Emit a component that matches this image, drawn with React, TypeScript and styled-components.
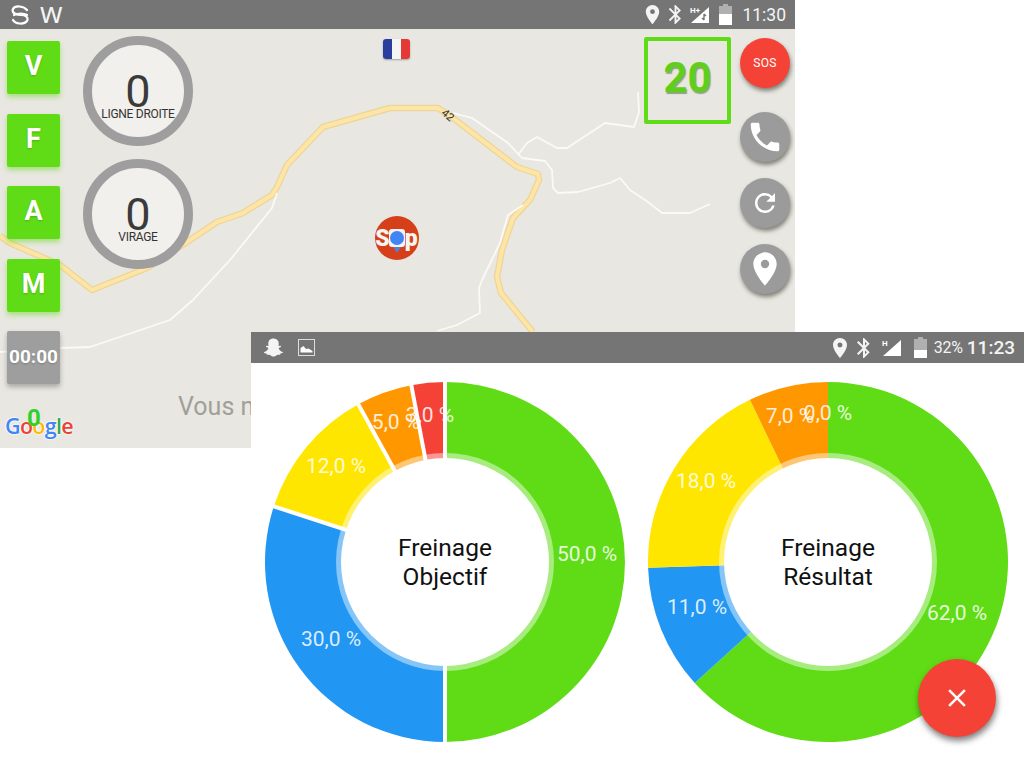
import React from 'react';
import styled, { createGlobalStyle } from 'styled-components';
import { FaSnapchatGhost } from 'react-icons/fa';
import { MdBluetooth, MdClose, MdLocationOn, MdPhone, MdRefresh } from 'react-icons/md';

const GlobalStyle = createGlobalStyle`
    html, body {
        margin: 0;
        padding: 0;
        background: #fff;
        font-family: Roboto, "Liberation Sans", sans-serif;
    }
`;

const Canvas = styled.div`
    position: relative;
    width: 1024px;
    height: 768px;
    overflow: hidden;
    background: #fff;
`;

const MapScreen = styled.section`
    position: absolute;
    left: 0;
    top: 0;
    width: 795px;
    height: 448px;
    display: flex;
    flex-direction: column;
`;

const ChartScreen = styled.section`
    position: absolute;
    left: 251px;
    top: 332px;
    width: 773px;
    height: 436px;
    background: #fff;
    display: flex;
    flex-direction: column;
`;

const StatusBar = styled.div<{ $height: number; $left: number }>`
    flex: none;
    height: ${p => p.$height}px;
    background: #757575;
    color: #f4f4f4;
    display: flex;
    align-items: center;
    justify-content: space-between;
    padding: 0 9px 0 ${p => p.$left}px;
`;

const StatusGroup = styled.div<{ $gap: number }>`
    display: flex;
    align-items: center;
    gap: ${p => p.$gap}px;
`;

const StatusSlot = styled.div<{ $before: number }>`
    display: flex;
    align-items: center;
    margin-left: ${p => p.$before}px;
`;

const Clock = styled.span<{ $weight: number; $size: number }>`
    font-size: ${p => p.$size}px;
    font-weight: ${p => p.$weight};
`;

const BatteryText = styled.span`
    font-size: 16px;
    letter-spacing: -0.2px;
`;

const AppLetter = styled.span`
    font-size: 29px;
    line-height: 24px;
    font-family: "Open Sans", sans-serif;
    margin-bottom: 5px;
`;

const MapArea = styled.div`
    position: relative;
    flex: 1;
    background: #e9e7e1;
    overflow: hidden;
    display: flex;
    padding-left: 7px;
    padding-right: 5px;
`;

const Roads = styled.svg`
    position: absolute;
    left: 0;
    top: 0;
    width: 795px;
    height: 419px;
`;

const LetterColumn = styled.div`
    position: relative;
    display: flex;
    flex-direction: column;
    gap: 19.5px;
    padding-top: 12px;
    margin-right: 23px;
`;

const LetterButton = styled.div<{ $muted?: boolean }>`
    box-sizing: border-box;
    width: 53px;
    height: 53px;
    padding-bottom: 3px;
    border-radius: 2px;
    background: ${p => (p.$muted ? '#9e9e9e' : '#5fdc15')};
    box-shadow: 0 3px 5px ${p => (p.$muted ? 'rgba(90,90,90,.45)' : 'rgba(95,220,21,.5)')};
    color: #fff;
    font-weight: 700;
    font-size: ${p => (p.$muted ? 19 : 27)}px;
    display: flex;
    align-items: center;
    justify-content: center;
    text-shadow: 0 1px 2px rgba(0, 0, 0, .2);
`;

const GaugeColumn = styled.div`
    position: relative;
    display: flex;
    flex-direction: column;
    gap: 13px;
    padding-top: 7px;
`;

const Gauge = styled.div`
    box-sizing: border-box;
    width: 110px;
    height: 110px;
    border: 9px solid #9e9e9e;
    border-radius: 50%;
    background: #f1f0ec;
    padding-top: 31px;
    display: flex;
    flex-direction: column;
    align-items: center;
    color: #333;
`;

const GaugeValue = styled.span`
    font-size: 45px;
    font-weight: 400;
    line-height: 32px;
    color: #3a3a3a;
`;

const GaugeLabel = styled.span`
    font-size: 12px;
    line-height: 12px;
    white-space: nowrap;
    letter-spacing: -0.3px;
`;

const Spacer = styled.div`
    flex: 1;
`;

const SpeedBox = styled.div`
    position: relative;
    box-sizing: border-box;
    width: 87px;
    height: 87px;
    margin: 8px 9px 0 0;
    padding-bottom: 6px;
    border: 4px solid #5fdc15;
    border-radius: 2px;
    display: flex;
    align-items: center;
    justify-content: center;
    color: #5fcf1c;
    font-size: 42px;
    font-weight: 700;
    text-shadow: 1px 2px 1px rgba(70, 110, 40, .55);
`;

const RoundColumn = styled.div`
    position: relative;
    display: flex;
    flex-direction: column;
    gap: 16px;
    padding-top: 9px;
`;

const RoundButton = styled.div<{ $red?: boolean }>`
    width: 50px;
    height: 50px;
    border-radius: 50%;
    background: ${p => (p.$red ? '#f44336' : '#9b9b9b')};
    box-shadow: 1px 3px 4px rgba(60, 60, 50, .6);
    color: #fff;
    display: flex;
    align-items: center;
    justify-content: center;
    font-size: 12px;
    letter-spacing: 0.4px;
    margin-bottom: ${p => (p.$red ? 8 : 0)}px;
`;

const Flag = styled.div`
    position: absolute;
    left: 383px;
    top: 10px;
    width: 27px;
    height: 20px;
    border-radius: 3px;
    overflow: hidden;
    display: flex;
    box-shadow: 0 1px 2px rgba(0, 0, 0, .3);
`;

const FlagStripe = styled.div<{ $color: string }>`
    flex: 1;
    background: ${p => p.$color};
`;

const StopMarker = styled.div`
    position: absolute;
    left: 375px;
    top: 187px;
    width: 44px;
    height: 44px;
    border-radius: 50%;
    background: #d5401b;
    color: #f6f4f2;
    font-weight: 900;
    font-size: 23px;
    letter-spacing: 1px;
    display: flex;
    align-items: center;
    justify-content: center;
`;

const StopDot = styled.div`
    position: absolute;
    left: 14px;
    top: 13px;
    width: 16px;
    height: 18px;
    border-radius: 3px;
    background: #f6f4f2;
    &::before {
        content: '';
        position: absolute;
        left: 1px;
        top: 2px;
        width: 14px;
        height: 14px;
        border-radius: 50%;
        background: #4285f4;
    }
    &::after {
        content: '';
        position: absolute;
        left: 4px;
        top: 18px;
        border: 4px solid transparent;
        border-top: 6px solid #5b7fc4;
    }
`;

const NoticeText = styled.div`
    position: absolute;
    left: 178px;
    top: 362px;
    font-size: 25px;
    line-height: 32px;
    color: #a09f98;
    white-space: nowrap;
`;

const GoogleMark = styled.div`
    position: absolute;
    left: 5px;
    top: 384px;
    font-family: "Open Sans", sans-serif;
    font-weight: 600;
    font-size: 21.5px;
    line-height: 26px;
    letter-spacing: -0.7px;
    text-shadow: 0 0 2px #fff, 0 0 2px #fff, 0 0 2px #fff;
`;

const GoogleLetter = styled.span<{ $color: string }>`
    color: ${p => p.$color};
`;

const CounterZero = styled.div`
    position: absolute;
    left: 27px;
    top: 375px;
    font-size: 24px;
    line-height: 28px;
    font-weight: 700;
    color: #2fd02a;
`;

const ChartRow = styled.div`
    display: flex;
    gap: 23px;
    padding: 19px 0 0 14px;
`;

const ChartSvg = styled.svg`
    width: 360px;
    height: 360px;
    flex: none;
`;

const SliceLabel = styled.text`
    font-family: Roboto, sans-serif;
    font-size: 21px;
    font-weight: 400;
    fill: rgba(255, 255, 255, .85);
    text-anchor: middle;
`;

const CenterLabel = styled.text`
    font-family: Roboto, sans-serif;
    font-size: 24.5px;
    fill: #111;
    text-anchor: middle;
`;

const Fab = styled.div`
    position: absolute;
    left: 667px;
    top: 327px;
    width: 78px;
    height: 78px;
    border-radius: 50%;
    background: #f44336;
    color: #fff;
    box-shadow: 1px 4px 6px rgba(0, 0, 0, .5);
    display: flex;
    align-items: center;
    justify-content: center;
`;

const GREEN = '#5fdc15';
const BLUE = '#2196f3';
const YELLOW = '#ffe600';
const ORANGE = '#ff9800';
const RED = '#f44336';

interface Slice {
    value: number;
    color: string;
    label: string;
    x: number;
    y: number;
}

const objectif: Slice[] = [
    { value: 50, color: GREEN, label: '50,0 %', x: 322, y: 179 },
    { value: 30, color: BLUE, label: '30,0 %', x: 66, y: 264 },
    { value: 12, color: YELLOW, label: '12,0 %', x: 71, y: 91 },
    { value: 5, color: ORANGE, label: '5,0 %', x: 131, y: 47 },
    { value: 3, color: RED, label: '3,0 %', x: 165, y: 40 },
];

const resultat: Slice[] = [
    { value: 62, color: GREEN, label: '62,0 %', x: 309, y: 238 },
    { value: 11, color: BLUE, label: '11,0 %', x: 49, y: 232 },
    { value: 18, color: YELLOW, label: '18,0 %', x: 58, y: 106 },
    { value: 7, color: ORANGE, label: '7,0 %', x: 142, y: 41 },
    { value: 0, color: RED, label: '0,0 %', x: 180, y: 38 },
];

const MAIN_ROAD = 'M0 236 L10 243 L60 265 L92 290 L147 268 L190 240 L217 222 L243 213 L272 195 L277 187 L287 165 L323 127 L390 108 L438 108 L453 118 L517 167 L538 174 L539 180 L530 200 L513 218 L502 250 L497 277 L501 293 L533 332';

const SIDE_ROADS = [
    'M0 352 L60 348 L90 347 L170 320 L193 300 L230 260 L272 208 L277 193',
    'M453 113 L472 118 L508 143 L522 158 L545 161 L552 170 L553 188 L558 193 L578 192 L610 183 L620 178 L630 190 L648 202 L662 213 L690 213 L710 204',
    'M518 155 L527 143 L537 137 L557 148 L567 148 L605 123 L634 127 L639 112 L638 92',
    'M523 205 L508 215 L500 243 L482 280 L479 288 L480 313 L457 325 L437 331',
];

const point = (angle: number, radius: number) => {
    const rad = (angle - 90) * Math.PI / 180;
    return [180 + radius * Math.cos(rad), 180 + radius * Math.sin(rad)];
};

const slicePath = (from: number, to: number) => {
    const [x1, y1] = point(from, 180);
    const [x2, y2] = point(to, 180);
    return `M180 180L${x1} ${y1}A180 180 0 ${to - from > 180 ? 1 : 0} 1 ${x2} ${y2}Z`;
};

const Donut: React.FC<{ slices: Slice[]; title: string[]; gap: number }> = ({ slices, title, gap }) => {
    const total = slices.reduce((sum, s) => sum + s.value, 0);
    let angle = 0;
    const parts = slices.filter(s => s.value > 0).map(s => {
        const from = angle;
        angle += s.value / total * 360;
        return { color: s.color, from, to: angle };
    });

    return (
        <ChartSvg viewBox="0 0 360 360">
            {parts.map(p => <path key={p.color} d={slicePath(p.from, p.to)} fill={p.color} />)}
            {gap > 0 && parts.map(p => {
                const [x, y] = point(p.from, 181);
                return <line key={p.color} x1={180} y1={180} x2={x} y2={y} stroke="#fff" strokeWidth={gap} />;
            })}
            <circle cx={180} cy={180} r={109} fill="#fff" fillOpacity={0.45} />
            <circle cx={180} cy={180} r={104} fill="#fff" />
            {slices.map(s => <SliceLabel key={s.label} x={s.x} y={s.y}>{s.label}</SliceLabel>)}
            <CenterLabel x={180} y={174}>{title[0]}</CenterLabel>
            <CenterLabel x={180} y={203}>{title[1]}</CenterLabel>
        </ChartSvg>
    );
};

const SignalIcon: React.FC<{ plus?: boolean; slashed?: boolean }> = ({ plus, slashed }) => (
    <svg width="20" height="20" viewBox="0 0 20 20">
        <path d="M1 18 L19 2 V18 Z" fill="#fff" />
        {slashed && <path d="M14 9 V15 M14 15 l-2-2 M14 9 l2 2" stroke="#757575" strokeWidth="1.4" fill="none" />}
        <text x="0" y="8" fontSize="8" fontWeight="700" fill="#fff" fontFamily="Roboto">{plus ? 'H+' : 'H'}</text>
    </svg>
);

const BatteryIcon: React.FC<{ level: number }> = ({ level }) => (
    <svg width="13" height="21" viewBox="0 0 13 21">
        <path d="M4 0 H9 V2 H13 V21 H0 V2 H4 Z" fill="#b0b0b0" />
        <rect x="0" y={21 - level} width="13" height={level} fill="#fff" />
    </svg>
);

const SwirlLogo = () => (
    <svg width="20" height="20" viewBox="0 0 20 20">
        <path
            d="M17 5 C14 1 5 0 3 4 C1 8 7 10 11 10 C15 10 19 12 17 16 C14 20 5 19 3 15 M4 10 C8 8 14 8 17 10"
            fill="none"
            stroke="#fff"
            strokeWidth="2.2"
            strokeLinecap="round"
        />
    </svg>
);

const ImageIcon = () => (
    <svg width="17" height="17" viewBox="0 0 17 17">
        <rect x="0.5" y="0.5" width="16" height="16" fill="none" stroke="#ddd" />
        <path d="M2.5 13.5 V9 L5.5 7 L8 10 L10.5 9.5 L14.5 12 V13.5 Z" fill="#fff" />
    </svg>
);

const App: React.FC = () => (
    <Canvas>
        <GlobalStyle />
        <MapScreen>
            <StatusBar $height={29} $left={10}>
                <StatusGroup $gap={10}>
                    <SwirlLogo />
                    <AppLetter>w</AppLetter>
                </StatusGroup>
                <StatusGroup $gap={0}>
                    <MdLocationOn size={23} />
                    <MdBluetooth size={23} />
                    <StatusSlot $before={3.5}><SignalIcon plus slashed /></StatusSlot>
                    <StatusSlot $before={9}><BatteryIcon level={11} /></StatusSlot>
                    <StatusSlot $before={10}><Clock $weight={400} $size={17.5}>11:30</Clock></StatusSlot>
                </StatusGroup>
            </StatusBar>
            <MapArea>
                <Roads viewBox="0 29 795 419">
                    <path d={MAIN_ROAD} fill="none" stroke="#eed596" strokeWidth="6.5" strokeLinejoin="round" />
                    <path d={MAIN_ROAD} fill="none" stroke="#fce5a6" strokeWidth="4" strokeLinejoin="round" />
                    {SIDE_ROADS.map(d => (
                        <path key={d} d={d} fill="none" stroke="#fbfaf6" strokeWidth="1.8" strokeLinejoin="round" />
                    ))}
                    <text x="448" y="119" fontSize="11" fill="#333" fontFamily="Roboto" textAnchor="middle" transform="rotate(40 448 115)">42</text>
                </Roads>
                <LetterColumn>
                    <LetterButton>V</LetterButton>
                    <LetterButton>F</LetterButton>
                    <LetterButton>A</LetterButton>
                    <LetterButton>M</LetterButton>
                    <LetterButton $muted>00:00</LetterButton>
                </LetterColumn>
                <GaugeColumn>
                    <Gauge>
                        <GaugeValue>0</GaugeValue>
                        <GaugeLabel>LIGNE DROITE</GaugeLabel>
                    </Gauge>
                    <Gauge>
                        <GaugeValue>0</GaugeValue>
                        <GaugeLabel>VIRAGE</GaugeLabel>
                    </Gauge>
                </GaugeColumn>
                <Spacer />
                <SpeedBox>20</SpeedBox>
                <RoundColumn>
                    <RoundButton $red>SOS</RoundButton>
                    <RoundButton><MdPhone size={38} /></RoundButton>
                    <RoundButton><MdRefresh size={30} /></RoundButton>
                    <RoundButton><MdLocationOn size={40} /></RoundButton>
                </RoundColumn>
                <Flag>
                    <FlagStripe $color="#2a3f9d" />
                    <FlagStripe $color="#f5f5f5" />
                    <FlagStripe $color="#e53935" />
                </Flag>
                <StopMarker>
                    Sop
                    <StopDot />
                </StopMarker>
                <NoticeText>Vous n</NoticeText>
                <GoogleMark>
                    <GoogleLetter $color="#4285f4">G</GoogleLetter>
                    <GoogleLetter $color="#ea4335">o</GoogleLetter>
                    <GoogleLetter $color="#fbbc05">o</GoogleLetter>
                    <GoogleLetter $color="#4285f4">g</GoogleLetter>
                    <GoogleLetter $color="#34a853">l</GoogleLetter>
                    <GoogleLetter $color="#ea4335">e</GoogleLetter>
                </GoogleMark>
                <CounterZero>0</CounterZero>
            </MapArea>
        </MapScreen>
        <ChartScreen>
            <StatusBar $height={31} $left={13}>
                <StatusGroup $gap={15}>
                    <FaSnapchatGhost size={19} />
                    <ImageIcon />
                </StatusGroup>
                <StatusGroup $gap={0}>
                    <MdLocationOn size={24} />
                    <MdBluetooth size={24} />
                    <StatusSlot $before={6}><SignalIcon /></StatusSlot>
                    <StatusSlot $before={12}><BatteryIcon level={8} /></StatusSlot>
                    <StatusSlot $before={7}><BatteryText>32%</BatteryText></StatusSlot>
                    <StatusSlot $before={4}><Clock $weight={500} $size={19}>11:23</Clock></StatusSlot>
                </StatusGroup>
            </StatusBar>
            <ChartRow>
                <Donut slices={objectif} title={['Freinage', 'Objectif']} gap={4} />
                <Donut slices={resultat} title={['Freinage', 'Résultat']} gap={0} />
            </ChartRow>
            <Fab><MdClose size={30} /></Fab>
        </ChartScreen>
    </Canvas>
);

export default App;
